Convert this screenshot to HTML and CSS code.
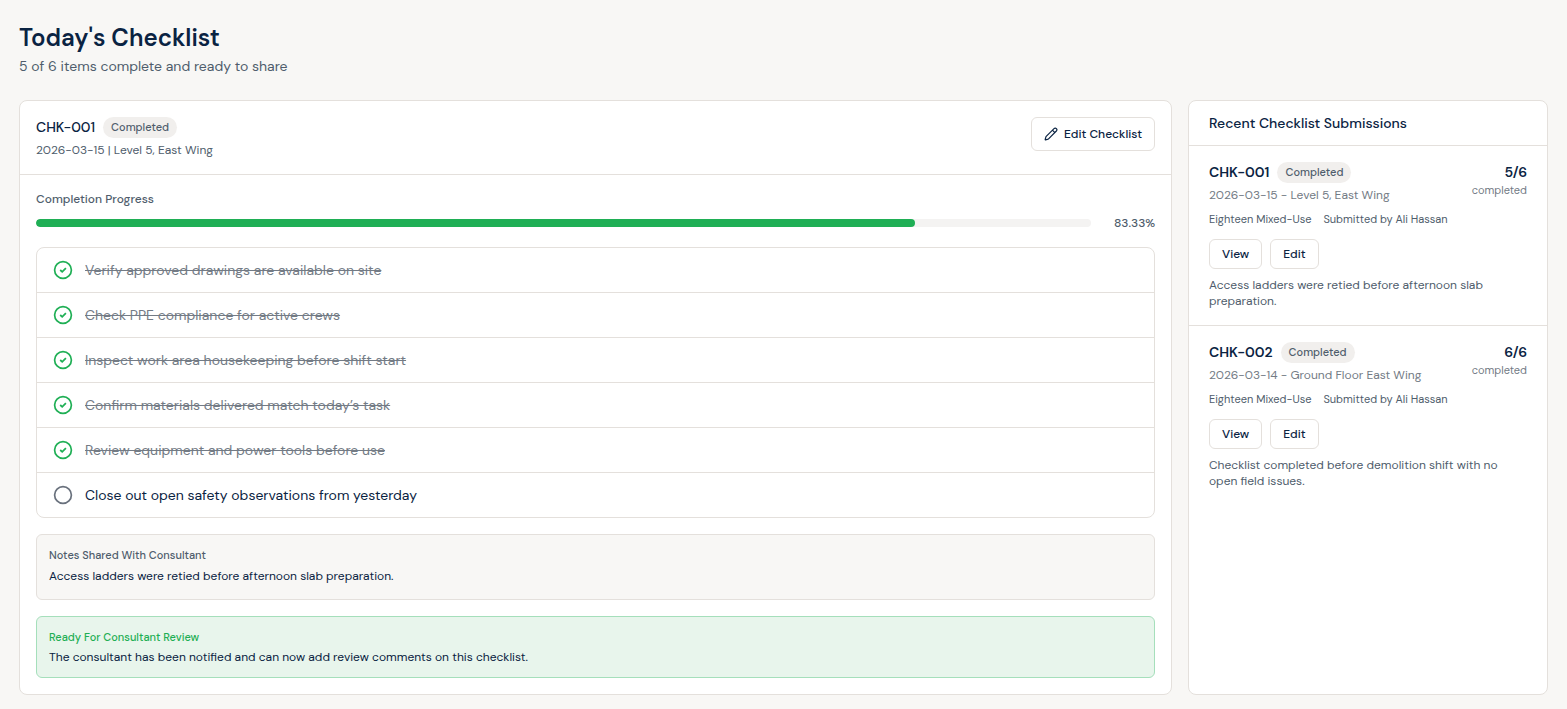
FILE: index.html
```html
<!DOCTYPE html>
<html lang="en">
<head>
<meta charset="utf-8">
<meta name="viewport" content="width=device-width, initial-scale=1">
<title>Today's Checklist</title>
<link rel="stylesheet" href="styles.css">
</head>
<body>
<svg class="sprite" aria-hidden="true">
  <symbol id="ring" viewBox="0 0 20 20"><circle cx="10" cy="10" r="8.4" fill="none" stroke="currentColor" stroke-width="1.7"/></symbol>
  <symbol id="ring-check" viewBox="0 0 20 20"><circle cx="10" cy="10" r="8.4" fill="none" stroke="currentColor" stroke-width="1.7"/><path d="M7.2 10l2 1.8 3.7-3.6" fill="none" stroke="currentColor" stroke-width="1.8"/></symbol>
</svg>
<main class="page">
  <header class="page-header">
    <h1 class="title">Today's Checklist</h1>
    <p class="subtitle">5 of 6 items complete and ready to share</p>
  </header>
  <div class="columns">
    <section class="card">
      <header class="card-header">
        <div class="stack">
          <div class="name-row"><h2 class="name name-main">CHK-001</h2><span class="badge">Completed</span></div>
          <p class="detail">2026-03-15 | Level 5, East Wing</p>
        </div>
        <button class="button button-wide" type="button">
          <svg class="pencil" viewBox="0 0 24 24" aria-hidden="true"><path d="M21.2 6.8a1 1 0 0 0-4-4L3.8 16.2a2 2 0 0 0-.5.8L2 21.4a.5.5 0 0 0 .6.6L7 20.7a2 2 0 0 0 .8-.5zM14.5 5.5l4 4"/></svg>
          Edit Checklist
        </button>
      </header>
      <div class="card-body">
        <div class="progress">
          <p class="progress-label" id="progress-label">Completion Progress</p>
          <div class="progress-row">
            <div class="track" role="progressbar" aria-labelledby="progress-label" aria-valuenow="83.33" aria-valuemin="0" aria-valuemax="100"><div class="fill" style="width:83.33%"></div></div>
            <span class="percent">83.33%</span>
          </div>
        </div>
        <ul class="checklist">
          <li class="item"><label class="item-label done"><input class="check" type="checkbox" checked><svg class="mark" aria-hidden="true"><use href="#ring-check"/></svg><span class="item-text">Verify approved drawings are available on site</span></label></li>
          <li class="item"><label class="item-label done"><input class="check" type="checkbox" checked><svg class="mark" aria-hidden="true"><use href="#ring-check"/></svg><span class="item-text">Check PPE compliance for active crews</span></label></li>
          <li class="item"><label class="item-label done"><input class="check" type="checkbox" checked><svg class="mark" aria-hidden="true"><use href="#ring-check"/></svg><span class="item-text">Inspect work area housekeeping before shift start</span></label></li>
          <li class="item"><label class="item-label done"><input class="check" type="checkbox" checked><svg class="mark" aria-hidden="true"><use href="#ring-check"/></svg><span class="item-text">Confirm materials delivered match today’s task</span></label></li>
          <li class="item"><label class="item-label done"><input class="check" type="checkbox" checked><svg class="mark" aria-hidden="true"><use href="#ring-check"/></svg><span class="item-text">Review equipment and power tools before use</span></label></li>
          <li class="item"><label class="item-label"><input class="check" type="checkbox"><svg class="mark" aria-hidden="true"><use href="#ring"/></svg><span class="item-text">Close out open safety observations from yesterday</span></label></li>
        </ul>
        <section class="note">
          <h3 class="note-title">Notes Shared With Consultant</h3>
          <p class="note-text">Access ladders were retied before afternoon slab preparation.</p>
        </section>
        <section class="note note-ready">
          <h3 class="note-title">Ready For Consultant Review</h3>
          <p class="note-text">The consultant has been notified and can now add review comments on this checklist.</p>
        </section>
      </div>
    </section>
    <aside class="card">
      <h2 class="side-title">Recent Checklist Submissions</h2>
      <article class="submission">
        <div class="submission-top">
          <div class="stack">
            <div class="name-row"><h3 class="name">CHK-001</h3><span class="badge">Completed</span></div>
            <p class="detail muted">2026-03-15 - Level 5, East Wing</p>
          </div>
          <div class="score"><strong class="count">5/6</strong><span class="small muted">completed</span></div>
        </div>
        <p class="meta"><span>Eighteen Mixed-Use</span><span>Submitted by Ali Hassan</span></p>
        <div class="actions"><button class="button" type="button">View</button><button class="button" type="button">Edit</button></div>
        <p class="detail">Access ladders were retied before afternoon slab preparation.</p>
      </article>
      <article class="submission">
        <div class="submission-top">
          <div class="stack">
            <div class="name-row"><h3 class="name">CHK-002</h3><span class="badge">Completed</span></div>
            <p class="detail muted">2026-03-14 - Ground Floor East Wing</p>
          </div>
          <div class="score"><strong class="count">6/6</strong><span class="small muted">completed</span></div>
        </div>
        <p class="meta"><span>Eighteen Mixed-Use</span><span>Submitted by Ali Hassan</span></p>
        <div class="actions"><button class="button" type="button">View</button><button class="button" type="button">Edit</button></div>
        <p class="detail">Checklist completed before demolition shift with no open field issues.</p>
      </article>
    </aside>
  </div>
</main>
</body>
</html>
```
FILE: styles.css
```css
:root {
  --ink: #0a2342;
  --slate: #4f5d6c;
  --muted: #737b85;
  --line: #e4e0dc;
  --canvas: #f8f7f5;
  --green: #1faf55;
}
* { box-sizing: border-box; }
body {
  margin: 0;
  background: var(--canvas);
  color: var(--ink);
  font: 400 12px/16px "DM Sans", Inter, sans-serif;
}
h1, h2, h3, p, ul { margin: 0; padding: 0; }
.sprite { position: absolute; width: 0; height: 0; }
.page { padding: 22px 19px 14px; }
.page-header { display: flex; flex-direction: column; gap: 2px; margin-bottom: 24px; }
.title { font-size: 24px; line-height: 32px; font-weight: 600; }
.subtitle { font-size: 14px; line-height: 20px; color: var(--slate); }
.columns { display: grid; grid-template-columns: minmax(0, 1fr) 360px; gap: 16px; }
.card { background: #fff; border: 1px solid var(--line); border-radius: 8px; }
.card-header {
  display: flex;
  justify-content: space-between;
  align-items: flex-start;
  padding: 16px;
  border-bottom: 1px solid var(--line);
}
.card-body { display: flex; flex-direction: column; gap: 16px; padding: 16px; }
.stack { display: flex; flex-direction: column; gap: 4px; }
.name-row { display: flex; align-items: flex-start; gap: 8px; }
.name { font-size: 14px; line-height: 20px; font-weight: 600; }
.name-main { font-weight: 500; }
.badge {
  padding: 2px 8px;
  border-radius: 12px;
  background: #f1efed;
  color: var(--slate);
  font-size: 11px;
  line-height: 17px;
  font-weight: 500;
}
.detail { color: var(--slate); }
.muted { color: var(--muted); }
.button {
  display: inline-flex;
  align-items: center;
  gap: 6px;
  height: 30px;
  padding: 0 12px;
  border: 1px solid var(--line);
  border-radius: 6px;
  background: #fff;
  color: var(--ink);
  font: 500 12px/16px "DM Sans", Inter, sans-serif;
}
.button-wide { height: 34px; }
.pencil { width: 14px; height: 14px; fill: none; stroke: currentColor; stroke-width: 2; stroke-linejoin: round; stroke-linecap: round; }
.progress { display: flex; flex-direction: column; gap: 8px; }
.progress-label, .percent { color: var(--slate); font-weight: 500; }
.progress-row { display: flex; align-items: center; gap: 16px; }
.track { flex: 1; height: 8px; border-radius: 4px; background: #f4f3f2; overflow: hidden; }
.fill { height: 100%; border-radius: 4px; background: var(--green); }
.percent { width: 48px; text-align: right; }
.checklist { list-style: none; border: 1px solid var(--line); border-radius: 8px; }
.item + .item { border-top: 1px solid var(--line); }
.item-label {
  display: grid;
  grid-template-columns: 20px 1fr;
  align-items: center;
  column-gap: 12px;
  padding: 12px 16px;
  font-size: 14px;
  line-height: 20px;
}
.check { grid-area: 1 / 1; width: 20px; height: 20px; margin: 0; appearance: none; border-radius: 50%; }
.mark { grid-area: 1 / 1; width: 20px; height: 20px; color: #69717d; pointer-events: none; }
.done { color: var(--muted); }
.done .item-text { text-decoration: line-through; }
.done .mark { color: var(--green); }
.note {
  display: flex;
  flex-direction: column;
  gap: 4px;
  padding: 12px 12px 14px;
  border: 1px solid var(--line);
  border-radius: 6px;
  background: var(--canvas);
}
.note-title { color: var(--slate); font-size: 11px; line-height: 16px; font-weight: 500; }
.note-text { line-height: 18px; }
.note-ready { padding-bottom: 12px; background: #e8f5ec; border-color: #a5dfbb; }
.note-ready .note-title { color: var(--green); }
.note-ready .note-text { line-height: 16px; }
.side-title { padding: 12px 20px; border-bottom: 1px solid var(--line); font-size: 14px; line-height: 20px; font-weight: 500; }
.submission { padding: 16px 20px; }
.submission + .submission { border-top: 1px solid var(--line); }
.submission-top { display: flex; justify-content: space-between; align-items: flex-start; }
.score { display: flex; flex-direction: column; align-items: flex-end; }
.count { font-size: 14px; line-height: 20px; font-weight: 600; }
.small { font-size: 11px; }
.meta { display: flex; gap: 12px; margin-top: 8px; color: var(--slate); font-size: 11px; }
.actions { display: flex; gap: 8px; margin: 12px 0 8px; }
```
